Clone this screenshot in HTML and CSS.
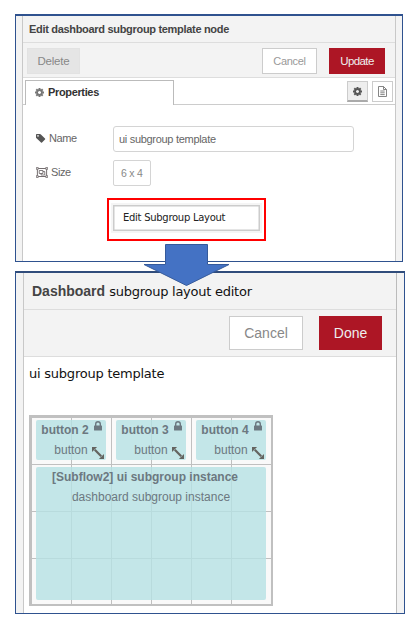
FILE: index.html
```html
<!DOCTYPE html>
<html lang="en">
<head>
<meta charset="utf-8">
<title>Dashboard subgroup template</title>
<link rel="stylesheet" href="styles.css">
</head>
<body>
<svg class="defs" width="0" height="0">
  <symbol id="gear" viewBox="0 0 16 16"><path fill="none" stroke="currentColor" stroke-width="3.4" d="M8 3.600a4.400 4.400 0 1 0 0 8.800a4.400 4.400 0 1 0 0-8.800z"/><path stroke="currentColor" stroke-width="3.4" d="M8 0v3M8 13v3M0 8h3M13 8h3M2.300 2.300l2 2M11.700 11.700l2 2M2.300 13.700l2-2M11.700 4.300l2-2"/></symbol>
  <symbol id="lock" viewBox="0 0 8 10"><path fill="none" stroke="currentColor" stroke-width="1.4" d="M1.700 5V3a2.300 2.300 0 0 1 4.600 0V5"/><rect y="4.500" width="8" height="5" rx=".5" fill="currentColor"/></symbol>
  <symbol id="resize" viewBox="0 0 13 13"><path stroke="currentColor" stroke-width="2.4" d="M3 3l7 7"/><path fill="currentColor" d="M0 0h5.500L0 5.500zM13 13H7.500L13 7.500z"/></symbol>
</svg>
<main class="page">
  <section class="panel edit">
    <div class="sheet">
      <header class="title">Edit dashboard subgroup template node</header>
      <div class="toolbar">
        <button class="btn delete">Delete</button>
        <button class="btn cancel">Cancel</button>
        <button class="btn primary">Update</button>
      </div>
      <nav class="tabs">
        <div class="tab"><svg class="tab-gear"><use href="#gear"/></svg><b>Properties</b></div>
        <button class="icon-btn active"><svg width="9" height="9"><use href="#gear"/></svg></button>
        <button class="icon-btn"><svg width="9" height="11" viewBox="0 0 9 11" fill="none" stroke="currentColor" stroke-width=".9"><path d="M.5.5h5l3 3v7h-8zM5.500.5v3h3M2.300 5h4.400M2.300 6.800h4.400M2.300 8.600h4.400"/></svg></button>
      </nav>
      <div class="form">
        <div class="row name-row">
          <label><svg width="10" height="9" viewBox="0 0 10 9"><path fill="#555" fill-rule="evenodd" d="M0 .7Q0 0 .7 0H4q.5 0 .9.4L9 4.400q.5.5 0 1L6 8.600q-.5.4-1 0L.5 4.300Q0 3.900 0 3.400zM1.200 1.900a.8.8 0 1 0 1.600 0a.8.8 0 1 0-1.600 0z"/></svg><span>Name</span></label>
          <div class="field">ui subgroup template</div>
        </div>
        <div class="row">
          <label><svg width="12" height="11" viewBox="0 0 13 11" preserveAspectRatio="none" fill="none" stroke="#6e6769"><path d="M1.500 1.500h10v8h-10z"/><path d="M3.500 3.500h4v3h-4zM5.500 6.500v1.500h4V4.500h-2" stroke-width=".9"/><path fill="#eee" stroke-width=".8" d="M.4.4h2v2h-2zM10.600.4h2v2h-2zM.4 8.600h2v2h-2zM10.600 8.600h2v2h-2z"/></svg><span>Size</span></label>
          <div class="field size">6 x 4</div>
        </div>
        <div class="highlight"><button class="layout-btn"><span>Edit Subgroup Layout</span></button></div>
      </div>
    </div>
  </section>
  <section class="panel layout">
    <div class="sheet">
      <header class="title"><b>Dashboard</b><span>subgroup layout editor</span></header>
      <div class="toolbar">
        <button class="btn cancel">Cancel</button>
        <button class="btn primary">Done</button>
      </div>
      <h2><span>ui subgroup template</span></h2>
      <div class="board">
        <div class="widgets">
          <div class="widget"><b>button 2</b><span>button</span><svg class="lock"><use href="#lock"/></svg><svg class="resize"><use href="#resize"/></svg></div>
          <div class="widget"><b>button 3</b><span>button</span><svg class="lock"><use href="#lock"/></svg><svg class="resize"><use href="#resize"/></svg></div>
          <div class="widget"><b>button 4</b><span>button</span><svg class="lock"><use href="#lock"/></svg><svg class="resize"><use href="#resize"/></svg></div>
          <div class="widget wide"><b>[Subflow2] ui subgroup instance</b><span>dashboard subgroup instance</span></div>
        </div>
      </div>
    </div>
  </section>
  <svg class="arrow" width="88" height="44" viewBox="0 0 88 44"><path fill="#4472c4" stroke="#355a9b" d="M22.500 1.500h42v20h21.500L43.500 42.500 1 21.500h21.500z"/></svg>
</main>
</body>
</html>
```

FILE: styles.css
```css
* { box-sizing: border-box; }
body { margin: 0; background: #fff; font-family: "Liberation Sans", Arial, sans-serif; }
button { font-family: inherit; padding: 0; margin: 0; }
.defs { position: absolute; }
.page { position: relative; width: 415px; height: 629px; padding: 14px 0 0 15px; }
.panel { border: 1px solid #2f528f; border-top-width: 2px; background: #f3f3f3; padding: 0 6px; }
.sheet { height: 100%; background: #fff; border: solid #c8c8c8; border-width: 0 1px; }
.title { background: #f3f3f3; border-bottom: 1px solid #ddd; white-space: nowrap; }
.toolbar { display: flex; background: #f3f3f3; border-bottom: 1px solid #ddd; }
.btn { border: 1px solid #ccc; background: #fff; color: #999; }
.btn.primary { background: #ad1625; border-color: #ad1625; color: #eee; }

.edit { width: 388px; height: 248px; }
.edit .title { height: 27px; padding-left: 6px; font: bold 11px/27px "Liberation Sans", sans-serif; color: #444; letter-spacing: -.31px; }
.edit .toolbar { height: 35px; padding: 5px 10px 0 4px; }
.edit .btn { height: 26px; font-size: 12px; letter-spacing: -.2px; }
.edit .delete { width: 53px; background: #e5e5e5; border-color: #e2e2e2; color: #888; margin-right: auto; font-size: 11.500px; }
.edit .cancel { width: 55px; font-size: 11px; letter-spacing: -.3px; }
.edit .primary { width: 56px; margin-left: 12px; font-size: 11.500px; letter-spacing: -.6px; }
.tabs { display: flex; height: 27px; padding: 2px 2px 0; border-bottom: 1px solid #ccc; }
.tab { display: flex; align-items: center; width: 149px; height: 25px; margin-right: auto; padding: 0 0 2px 9px; border: 1px solid #bbb; border-bottom: 0; background: #fff; font-size: 11px; letter-spacing: -.35px; color: #333; }
.tab-gear { width: 9px; height: 9px; margin-right: 4px; color: #777; }
.icon-btn { display: grid; place-items: center; width: 21px; height: 21px; margin: 1px 0 0 4px; border: 1px solid #ccc; background: #fff; color: #777; }
.icon-btn.active { background: #eee; border-bottom: 2px solid #aaa; color: #555; }
.form { padding-top: 21px; }
.row { display: flex; align-items: center; padding-left: 13px; height: 26px; }
.name-row { margin-bottom: 8px; }
.row label { display: flex; align-items: center; width: 77px; padding-bottom: 2px; gap: 3px; color: #666; font-size: 11px; letter-spacing: -.4px; }
.field { width: 241px; height: 26px; border: 1px solid #d4d4d4; border-radius: 3px; padding-left: 5px; font-size: 11px; line-height: 24px; letter-spacing: -.3px; color: #666; white-space: nowrap; }
.field.size { width: 38px; padding-left: 7px; font-size: 10.500px; letter-spacing: -.2px; color: #888; border-radius: 2px; }
.highlight { width: 159px; height: 43px; margin: 12px 0 0 84px; border: 2px solid #f00; padding: 3px 2px; background: #fff; }
.layout-btn { display: flex; align-items: center; width: 151px; height: 30px; border: 2px solid #f5f5f5; background: #fff; box-shadow: inset 0 0 0 1.500px #ccc; padding: 0 0 1px 10px; font: 10px "DejaVu Sans", sans-serif; letter-spacing: -.28px; color: #222; white-space: nowrap; }

.layout { width: 390px; height: 343px; margin-top: 9px; padding: 0 7px; border-top-color: #304c7b; }
.layout .sheet { border-right-color: #bbb; }
.layout .title { display: flex; gap: 4px; height: 37px; padding-left: 8px; font-size: 14px; line-height: 36px; color: #444; }
.layout .title span { font: 13px/38px "DejaVu Sans", sans-serif; color: #111; letter-spacing: -.25px; }
.layout .toolbar { height: 47px; padding: 6px 14px 0 0; justify-content: flex-end; }
.layout .btn { width: 74px; height: 34px; font-size: 14px; color: #888; }
.layout .primary { width: 63px; margin-left: 16px; color: #eee; }
h2 { height: 58px; margin: 0; padding: 8px 0 0 5px; font: 13px/18px "DejaVu Sans", sans-serif; letter-spacing: -.23px; color: #111; }
.board { width: 244px; height: 191px; margin-left: 5px; border: 3px solid #c0c0c0; border-width: 3px 2px 2px 3px; background: repeating-linear-gradient(90deg, transparent 0 39px, #c0c0c0 39px 40px), repeating-linear-gradient(transparent 0 46px, #c0c0c0 46px 47px), #f9f9f9; background-size: 100% 100%; }
.widgets { display: grid; grid-template: 40px 133px / repeat(3, 70px); gap: 7px 10px; padding: 2px 4px; }
.widget { position: relative; display: flex; flex-direction: column; align-items: center; border-radius: 2px; background: rgba(181,225,228,.8); font-size: 12px; line-height: 20px; color: #6c7880; white-space: nowrap; }
.widget b { margin-right: 12px; }
.wide { grid-column: span 3; }
.lock { position: absolute; width: 8px; height: 10px; top: 1px; right: 4px; }
.resize { position: absolute; width: 12px; height: 12px; right: 2px; bottom: 1px; color: #646460; }
.arrow { position: absolute; left: 143px; top: 243px; }
```
